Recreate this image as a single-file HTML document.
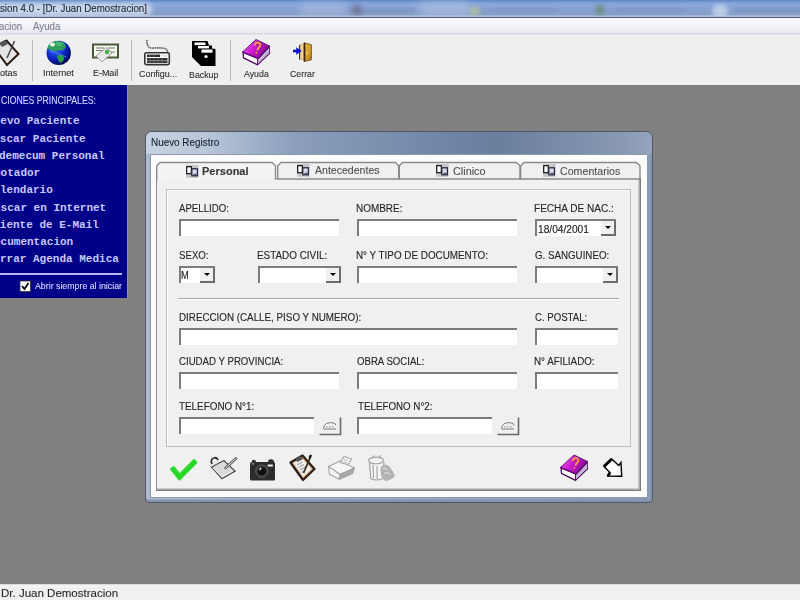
<!DOCTYPE html>
<html><head><meta charset="utf-8">
<style>
*{margin:0;padding:0;box-sizing:border-box}
html,body{width:800px;height:600px;overflow:hidden;background:#808080;font-family:"Liberation Sans",sans-serif}
.a{position:absolute}
.tx{position:absolute;white-space:nowrap;transform-origin:0 0;-webkit-text-stroke:0.12px currentColor}
#title{left:0;top:0;width:800px;height:17px;background:linear-gradient(#5c86c6 0,#7a9ad2 2px,#8aa8da 5px,#88a4d6 7px,#849ecc 10px,#879ec8 14.5px,#b0c0de 16px,#a8bce0 17px);}
#tline{left:0;top:16.5px;width:800px;height:1.3px;background:#545e74}
#menu{left:0;top:17.5px;width:800px;height:16px;background:linear-gradient(#fafafd,#e8e9f1);}
#menuline{left:0;top:33px;width:800px;height:2px;background:linear-gradient(#d4d6de,#e6e7ec)}
#toolbar{left:0;top:35px;width:800px;height:50px;background:#efefef;}
.sep{position:absolute;top:40px;width:1px;height:41px;background:#b8b8b8}
#status{left:0;top:584px;width:800px;height:16px;background:#f0f0f0;}
#statusline{left:0;top:584px;width:800px;height:3px;background:linear-gradient(#d2d2d2 0,#e6e6e6 1px,#fafafa 2px,#f2f2f2 3px)}
#panel{left:0;top:85px;width:128px;height:213px;background:#000088;border-right:1px solid #8c8cd8}
.tb{position:absolute;height:17px;background:#fff;border-top:2px solid #7c7c7c;border-left:2px solid #7c7c7c}
.cb{position:absolute;height:17px;background:#fff;border-top:2px solid #7c7c7c;border-left:2px solid #7c7c7c}
.cb i{position:absolute;right:0;top:0;width:15px;height:15px;background:#f0f0f0;border-right:2px solid #6c6c6c;border-bottom:2px solid #6c6c6c}
.cb i:after{content:"";position:absolute;left:3.5px;top:5px;border-left:3px solid transparent;border-right:3px solid transparent;border-top:3.5px solid #000}
.tab{position:absolute;top:162px;height:17px;background:#f0f0f0;border:1.5px solid #8c8c8c;border-radius:3px 3px 0 0}
</style></head><body>
<div id="title" class="a"></div>
<div class="a" style="left:0;top:0;width:800px;height:16px;overflow:hidden">
 <div class="a" style="left:-10px;top:3px;width:162px;height:13px;border-radius:6px;background:#d2dcee;filter:blur(2.5px);opacity:.9"></div>
 <div class="a" style="left:420px;top:2px;width:50px;height:14px;background:#b4c6e6;filter:blur(4px);opacity:.6"></div>
 <div class="a" style="left:300px;top:2px;width:45px;height:14px;background:#b0c4e6;filter:blur(4px);opacity:.5"></div>
 <div class="a" style="left:352px;top:5px;width:10px;height:10px;background:#6a6a8a;filter:blur(2.5px);opacity:.7"></div>
 <div class="a" style="left:365px;top:8px;width:50px;height:4px;background:#7a8ab8;filter:blur(1.5px);opacity:.35"></div>
 <div class="a" style="left:470px;top:7px;width:10px;height:8px;background:#b8c890;filter:blur(2px);opacity:.7"></div>
 <div class="a" style="left:490px;top:8px;width:65px;height:4px;background:#7a8ab8;filter:blur(1.5px);opacity:.3"></div>
 <div class="a" style="left:596px;top:5px;width:8px;height:10px;background:#6a8a70;filter:blur(2px);opacity:.7"></div>
 <div class="a" style="left:615px;top:8px;width:70px;height:4px;background:#7a8ab8;filter:blur(1.5px);opacity:.3"></div>
 <div class="a" style="left:712px;top:4px;width:16px;height:14px;border-radius:8px;background:#d0def4;filter:blur(2px);opacity:.7"></div>
 <div class="a" style="left:736px;top:8px;width:64px;height:4px;background:#6a7aa8;filter:blur(1.5px);opacity:.3"></div>
</div>
<div id="tline" class="a"></div>
<div id="menu" class="a"></div>
<div id="menuline" class="a"></div>
<div id="toolbar" class="a"></div>
<div class="sep" style="left:32px"></div>
<div class="sep" style="left:131px"></div>
<div class="sep" style="left:230px"></div>
<div id="panel" class="a"></div>
<div class="a" style="left:0;top:273px;width:122px;height:2px;background:#b4b4f0"></div>
<!-- dialog frame -->
<div class="a" style="left:145px;top:131px;width:508px;height:372px;border-radius:7px 7px 4px 4px;background:linear-gradient(90deg,#aebbce,#9cabc2 50%,#8c9cb6);border:1px solid #505868;box-shadow:inset 0 -2.5px 0 #8494b0,inset -2px 0 0 #8494b0"></div>
<div class="a" style="left:146px;top:132px;width:506px;height:22px;border-radius:6px 6px 0 0;background:linear-gradient(90deg,#c6d2e0 0px,#b8c6d8 60px,#8a9ebc 150px,#7086a6 300px,#6a7e9e 350px,#7a8ca8 420px,#8a9ab4 480px,#96a5bc 506px)"></div>
<div class="a" style="left:150px;top:154px;width:498px;height:344px;background:#fcfcfd;border:1px solid #9098a8"></div>
<!-- tab control page -->
<div class="a" style="left:156px;top:178px;width:485px;height:313px;background:#f0f0f0;border-left:1.5px solid #8c8c8c;border-top:1.5px solid #8c8c8c;border-right:1.5px solid #7a7a7a;border-bottom:1.5px solid #7a7a7a;box-shadow:inset -1.5px -1.5px 0 #a8a8a8"></div>
<svg class="a" style="left:0;top:0" width="800" height="600" viewBox="0 0 800 600">
<g stroke="#8a8a8a" stroke-width="1.4" fill="#f0f0f0">
<path d="M277.7,179 L277.7,165.8 L281,162.5 L395.5,162.5 L398.7,165.8 L398.7,179 Z"/>
<path d="M399.3,179 L399.3,165.8 L402.6,162.5 L516.5,162.5 L520,165.8 L520,179 Z"/>
<path d="M520.6,179 L520.6,165.8 L524,162.5 L636.5,162.5 L640,165.8 L640,179 Z"/>
</g>
<path d="M156.7,181 L156.7,165.8 L160,162.5 L272,162.5 L275.5,165.8 L275.5,179.8" stroke="#8a8a8a" stroke-width="1.4" fill="#f3f3f3"/>
</svg>
<!-- groupbox -->
<div class="a" style="left:166px;top:189px;width:465px;height:258px;border:1px solid #bdbdbd;box-shadow:inset 1px 1px 0 #fff"></div>
<!-- fields -->
<div class="tb" style="left:179px;top:219px;width:160px"></div>
<div class="tb" style="left:357px;top:219px;width:160px"></div>
<div class="cb" style="left:535px;top:219px;width:81px"><i></i></div>
<div class="cb" style="left:179px;top:266px;width:36px"><i></i></div>
<div class="cb" style="left:258px;top:266px;width:83px"><i></i></div>
<div class="tb" style="left:357px;top:266px;width:160px"></div>
<div class="cb" style="left:535px;top:266px;width:83px"><i></i></div>
<div class="a" style="left:178px;top:298px;width:441px;height:2px;border-top:1px solid #a8a8a8;border-bottom:1px solid #fff"></div>
<div class="tb" style="left:179px;top:328px;width:338px"></div>
<div class="tb" style="left:535px;top:328px;width:83px"></div>
<div class="tb" style="left:179px;top:372px;width:160px"></div>
<div class="tb" style="left:357px;top:372px;width:160px"></div>
<div class="tb" style="left:535px;top:372px;width:83px"></div>
<div class="tb" style="left:179px;top:417px;width:135px"></div>
<div class="tb" style="left:357px;top:417px;width:135px"></div>
<div id="status" class="a"></div>
<div id="statusline" class="a"></div>
<div class="tx" style="left:-0.30px;top:3.30px;font-family:'Liberation Sans';font-size:10.5px;line-height:10.5px;color:#1c2636;transform:scaleX(0.9259);">sion 4.0 - [Dr. Juan Demostracion]</div>
<div class="tx" style="left:33.20px;top:21.80px;font-family:'Liberation Sans';font-size:10px;line-height:10px;color:#7e808e;transform:scaleX(0.9714);-webkit-text-stroke:0.1px">Ayuda</div>
<div class="tx" style="left:-1.34px;top:21.80px;font-family:'Liberation Sans';font-size:10px;line-height:10px;color:#7e808e;transform:scaleX(0.9714);-webkit-text-stroke:0.1px">acion</div>
<div class="tx" style="left:42.54px;top:68.35px;font-family:'Liberation Sans';font-size:9.5px;line-height:9.5px;color:#303030;transform:scaleX(0.9581);">Internet</div>
<div class="tx" style="left:92.76px;top:68.35px;font-family:'Liberation Sans';font-size:9.5px;line-height:9.5px;color:#303030;transform:scaleX(0.9400);">E-Mail</div>
<div class="tx" style="left:0.45px;top:68.35px;font-family:'Liberation Sans';font-size:9.5px;line-height:9.5px;color:#303030;transform:scaleX(0.9581);">otas</div>
<div class="tx" style="left:138.75px;top:68.62px;font-family:'Liberation Sans';font-size:9.5px;line-height:9.5px;color:#303030;transform:scaleX(0.9375);">Configu...</div>
<div class="tx" style="left:189.07px;top:70.25px;font-family:'Liberation Sans';font-size:9.5px;line-height:9.5px;color:#303030;transform:scaleX(0.9274);">Backup</div>
<div class="tx" style="left:243.75px;top:68.62px;font-family:'Liberation Sans';font-size:9.5px;line-height:9.5px;color:#303030;transform:scaleX(0.9259);">Ayuda</div>
<div class="tx" style="left:290.00px;top:68.62px;font-family:'Liberation Sans';font-size:9.5px;line-height:9.5px;color:#303030;transform:scaleX(0.9259);">Cerrar</div>
<div class="tx" style="left:1.21px;top:95.05px;font-family:'Liberation Sans';font-size:11px;line-height:11px;color:#d4d4ff;transform:scaleX(0.7899);">CIONES PRINCIPALES:</div>
<div class="tx" style="left:-12.90px;top:116.30px;font-family:'Liberation Mono';font-weight:bold;font-size:11px;line-height:11px;color:#c8c8f8;transform:scaleX(1.0000);-webkit-text-stroke:0">Nuevo Paciente</div>
<div class="tx" style="left:-13.40px;top:133.57px;font-family:'Liberation Mono';font-weight:bold;font-size:11px;line-height:11px;color:#c8c8f8;transform:scaleX(1.0000);-webkit-text-stroke:0">Buscar Paciente</div>
<div class="tx" style="left:-14.20px;top:150.84px;font-family:'Liberation Mono';font-weight:bold;font-size:11px;line-height:11px;color:#c8c8f8;transform:scaleX(1.0000);-webkit-text-stroke:0">Vademecum Personal</div>
<div class="tx" style="left:-12.60px;top:168.11px;font-family:'Liberation Mono';font-weight:bold;font-size:11px;line-height:11px;color:#c8c8f8;transform:scaleX(1.0000);-webkit-text-stroke:0">Anotador</div>
<div class="tx" style="left:-13.20px;top:185.38px;font-family:'Liberation Mono';font-weight:bold;font-size:11px;line-height:11px;color:#c8c8f8;transform:scaleX(1.0000);-webkit-text-stroke:0">Calendario</div>
<div class="tx" style="left:-12.60px;top:202.65px;font-family:'Liberation Mono';font-weight:bold;font-size:11px;line-height:11px;color:#c8c8f8;transform:scaleX(1.0000);-webkit-text-stroke:0">Buscar en Internet</div>
<div class="tx" style="left:-13.40px;top:219.92px;font-family:'Liberation Mono';font-weight:bold;font-size:11px;line-height:11px;color:#c8c8f8;transform:scaleX(1.0000);-webkit-text-stroke:0">Cliente de E-Mail</div>
<div class="tx" style="left:-12.60px;top:237.19px;font-family:'Liberation Mono';font-weight:bold;font-size:11px;line-height:11px;color:#c8c8f8;transform:scaleX(1.0000);-webkit-text-stroke:0">Documentacion</div>
<div class="tx" style="left:-13.20px;top:254.46px;font-family:'Liberation Mono';font-weight:bold;font-size:11px;line-height:11px;color:#c8c8f8;transform:scaleX(1.0000);-webkit-text-stroke:0">Cerrar Agenda Medica</div>
<div class="tx" style="left:35.10px;top:281.20px;font-family:'Liberation Sans';font-size:9.5px;line-height:9.5px;color:#d8d8ff;transform:scaleX(0.9255);">Abrir siempre al iniciar</div>
<div class="tx" style="left:151.10px;top:137.00px;font-family:'Liberation Sans';font-size:11px;line-height:11px;color:#1a2230;transform:scaleX(0.9000);">Nuevo Registro</div>
<div class="tx" style="left:201.90px;top:166.45px;font-family:'Liberation Sans';font-weight:bold;font-size:11px;line-height:11px;color:#383838;transform:scaleX(1.0022);">Personal</div>
<div class="tx" style="left:314.60px;top:165.35px;font-family:'Liberation Sans';font-size:11px;line-height:11px;color:#505050;transform:scaleX(0.9597);">Antecedentes</div>
<div class="tx" style="left:452.52px;top:165.50px;font-family:'Liberation Sans';font-size:11px;line-height:11px;color:#505050;transform:scaleX(0.9844);">Clinico</div>
<div class="tx" style="left:560.03px;top:166.00px;font-family:'Liberation Sans';font-size:11px;line-height:11px;color:#505050;transform:scaleX(0.9672);">Comentarios</div>
<div class="tx" style="left:178.80px;top:204.00px;font-family:'Liberation Sans';font-size:10px;line-height:10px;color:#262626;transform:scaleX(0.9647);">APELLIDO:</div>
<div class="tx" style="left:356.00px;top:204.00px;font-family:'Liberation Sans';font-size:10px;line-height:10px;color:#262626;transform:scaleX(0.9956);">NOMBRE:</div>
<div class="tx" style="left:533.79px;top:204.00px;font-family:'Liberation Sans';font-size:10px;line-height:10px;color:#262626;transform:scaleX(1.0051);">FECHA DE NAC.:</div>
<div class="tx" style="left:178.53px;top:251.25px;font-family:'Liberation Sans';font-size:10px;line-height:10px;color:#262626;transform:scaleX(0.9655);">SEXO:</div>
<div class="tx" style="left:257.01px;top:251.25px;font-family:'Liberation Sans';font-size:10px;line-height:10px;color:#262626;transform:scaleX(0.9891);">ESTADO CIVIL:</div>
<div class="tx" style="left:355.76px;top:251.25px;font-family:'Liberation Sans';font-size:10px;line-height:10px;color:#262626;transform:scaleX(0.9860);">N&deg; Y TIPO DE DOCUMENTO:</div>
<div class="tx" style="left:534.90px;top:251.25px;font-family:'Liberation Sans';font-size:10px;line-height:10px;color:#262626;transform:scaleX(0.9747);">G. SANGUINEO:</div>
<div class="tx" style="left:178.52px;top:313.25px;font-family:'Liberation Sans';font-size:10px;line-height:10px;color:#262626;transform:scaleX(0.9810);">DIRECCION (CALLE, PISO Y NUMERO):</div>
<div class="tx" style="left:535.10px;top:313.25px;font-family:'Liberation Sans';font-size:10px;line-height:10px;color:#262626;transform:scaleX(0.9611);">C. POSTAL:</div>
<div class="tx" style="left:178.75px;top:357.25px;font-family:'Liberation Sans';font-size:10px;line-height:10px;color:#262626;transform:scaleX(0.9650);">CIUDAD Y PROVINCIA:</div>
<div class="tx" style="left:356.75px;top:357.25px;font-family:'Liberation Sans';font-size:10px;line-height:10px;color:#262626;transform:scaleX(0.9616);">OBRA SOCIAL:</div>
<div class="tx" style="left:533.92px;top:357.25px;font-family:'Liberation Sans';font-size:10px;line-height:10px;color:#262626;transform:scaleX(0.9800);">N&deg; AFILIADO:</div>
<div class="tx" style="left:179.40px;top:402.00px;font-family:'Liberation Sans';font-size:10px;line-height:10px;color:#262626;transform:scaleX(0.9868);">TELEFONO N&deg;1:</div>
<div class="tx" style="left:357.50px;top:402.00px;font-family:'Liberation Sans';font-size:10px;line-height:10px;color:#262626;transform:scaleX(0.9763);">TELEFONO N&deg;2:</div>
<div class="tx" style="left:538.03px;top:223.70px;font-family:'Liberation Sans';font-size:10.5px;line-height:10.5px;color:#1a1a1a;transform:scaleX(0.9686);">18/04/2001</div>
<div class="tx" style="left:181.37px;top:271.40px;font-family:'Liberation Sans';font-size:10px;line-height:10px;color:#1a1a1a;transform:scaleX(0.9286);">M</div>
<div class="tx" style="left:0.85px;top:587.85px;font-family:'Liberation Sans';font-size:11px;line-height:11px;color:#2a2a2a;transform:scaleX(1.0464);">Dr. Juan Demostracion</div>
<svg class="a" style="left:0;top:0" width="800" height="600" viewBox="0 0 800 600">
<defs>
<radialGradient id="gl" cx="0.35" cy="0.3" r="0.75"><stop offset="0" stop-color="#3a70ff"/><stop offset="0.6" stop-color="#0a22c0"/><stop offset="1" stop-color="#000848"/></radialGradient>
<linearGradient id="bk" x1="0" y1="0.3" x2="1" y2="0.7"><stop offset="0" stop-color="#f050f0"/><stop offset="0.45" stop-color="#c818c8"/><stop offset="1" stop-color="#7a0a8a"/></linearGradient>
<linearGradient id="dr" x1="0" y1="0" x2="1" y2="1"><stop offset="0" stop-color="#f4c444"/><stop offset="0.6" stop-color="#d49a28"/><stop offset="1" stop-color="#a86c10"/></linearGradient>
</defs>
<!-- Notas clipboard (toolbar, clipped at left) -->
<g transform="translate(-16,-415)">
 <path d="M10,462.5 L22.5,455.5 L34.5,469 L23,480 Z" fill="#e4e4e4" stroke="#2a1a14" stroke-width="2"/>
 <path d="M15,458 L21,455 L24,459 L18,462 Z" fill="#555"/>
 <path d="M23,473 L30.5,456" stroke="#444" stroke-width="1.5"/>
</g>
<!-- globe -->
<circle cx="58.7" cy="52.9" r="12.2" fill="url(#gl)"/>
<path d="M47.5,47.5 Q49,42.5 54,41.2 Q59,40.6 63,42.3 Q66.5,44.5 65.5,48 Q63,51.5 59.5,50 Q56,51.5 52.5,50.5 Q49,50.5 47.5,47.5 Z" fill="#2e9c5c"/>
<path d="M56,42 Q60,41.5 63,43 Q62,46 58.5,46.5 Q56,45.5 56,42 Z" fill="#50c080" opacity="0.8"/>
<ellipse cx="52.5" cy="44.6" rx="2.6" ry="2.1" fill="#e8f4ec"/>
<path d="M49.5,50.5 Q57,53 66.5,57" fill="none" stroke="#5a9ae8" stroke-width="1.3" opacity="0.7"/>
<path d="M57,55.5 Q61.5,54 64.2,57.5 Q63.8,61.5 60.5,63 Q57.5,60.5 57,55.5 Z" fill="#28a040"/>
<!-- email -->
<rect x="93" y="44.5" width="25" height="13" fill="#f4f8ec" stroke="#4a5a3a" stroke-width="2"/>
<path d="M96,48 h8 M96,50.5 h6 M108,48 h7 M108,52 h7" stroke="#777" stroke-width="1"/>
<path d="M96,56 L106,47.5 L112,53 L102,62 Z" fill="#e8e8e8" stroke="#888" stroke-width="0.8"/>
<circle cx="107" cy="52" r="2.2" fill="#40b050"/>
<!-- keyboard -->
<path d="M147,40 Q146.5,43 148,46 Q149.5,48.5 154,48 Q160,47.5 165,48.5 Q167.5,49.5 167.5,52.5" fill="none" stroke="#666" stroke-width="1.7" stroke-dasharray="1.6 0.6"/>
<rect x="144.8" y="52.8" width="24.5" height="11.8" rx="1.5" fill="#fff" stroke="#333" stroke-width="1.6"/>
<rect x="147" y="54.6" width="13" height="2.4" fill="#2a2a2a"/>
<rect x="160.5" y="55" width="7" height="1.6" fill="#ddd"/>
<rect x="147" y="58" width="20.5" height="2.6" fill="#2a2a2a"/>
<rect x="147" y="61" width="20.5" height="2" fill="#3a3a3a"/>
<path d="M150,58 v5 M154,58 v5 M158,58 v5 M162,58 v5 M150,54.6 v2.4 M154,54.6 v2.4" stroke="#888" stroke-width="0.6"/>
<!-- backup floppies -->
<path d="M192,41 L207.5,41 L209,45.5 L212,45.5 L212,48.5 L215.5,49 L215.5,66 L201,66 L192,57 Z" fill="#000"/>
<rect x="194.5" y="42.5" width="11" height="2.6" fill="#fff"/>
<rect x="198" y="46" width="11" height="2.4" fill="#fff"/>
<rect x="201.5" y="49.5" width="11" height="3.2" fill="#fff"/>
<circle cx="206" cy="56.5" r="1.6" fill="#fff"/>
<!-- ayuda book toolbar -->
<g id="book">
 <path d="M243,52 L243.5,57.8 L257.5,64.8 L269.5,53.2 L269,46 Z" fill="#fff" stroke="#4a0a5a" stroke-width="1.3" stroke-linejoin="round"/>
 <path d="M257.5,58.5 L269,47.5 L269.3,52.8 L257.5,64.2 Z" fill="#c4b4d8"/>
 <path d="M256,39.5 L269.5,46 L258,58.2 L242.5,52 Z" fill="url(#bk)" stroke="#5a0a70" stroke-width="0.9" stroke-linejoin="round"/>
 <path d="M243,52.3 L258,58.6 L269.5,46.5" fill="none" stroke="#5a0a70" stroke-width="1.4"/>
 <path d="M257.5,58.5 L257.5,64.6" stroke="#5a0a70" stroke-width="1"/>
 <path d="M254.5,45.5 Q255.5,42.2 258.8,42.8 Q261.5,44 259.5,47 Q257.8,48.3 257.3,50.3" fill="none" stroke="#f8a040" stroke-width="1.8"/>
 <path d="M256.2,45.2 Q257.5,43.8 258.6,44.8" fill="none" stroke="#8a3a20" stroke-width="0.9"/>
 <circle cx="256.4" cy="52.6" r="0.9" fill="#f8a040"/>
</g>
<!-- cerrar door -->
<rect x="299.5" y="44.2" width="5" height="15.3" fill="#f8d48c"/>
<path d="M299.5,44.2 h5 M299.5,59.5 h5" stroke="#c8c0a0" stroke-width="0.9"/>
<path d="M299.6,45 v14.5" stroke="#3a3a30" stroke-width="1.2"/>
<path d="M304,42.7 L311.4,44.8 L311.4,59.8 L304,61.6 Z" fill="url(#dr)" stroke="#6a4a10" stroke-width="0.8"/>
<path d="M304.6,43 L304.6,61.3" stroke="#3a2808" stroke-width="1.6"/>
<circle cx="306.8" cy="53" r="0.7" fill="#fff0c0"/>
<path d="M293,51 L297.5,51" stroke="#1010c8" stroke-width="2.6"/>
<path d="M296.2,47.2 L301.8,51 L296.2,54.8 Z" fill="#1414d0"/>
<!-- dialog bottom: check -->
<path d="M173.5,469.5 L179.5,477 L194,462.5" fill="none" stroke="#a8f0a8" stroke-width="6.5" stroke-linecap="round" stroke-linejoin="round"/>
<path d="M173.5,469.5 L179.5,477 L194,462.5" fill="none" stroke="#28d828" stroke-width="5" stroke-linecap="square" stroke-linejoin="miter"/>
<!-- tablet -->
<path d="M211.5,467 L224,460.5 L235,471 L222,478.5 Z" fill="#dadada" stroke="#555" stroke-width="1.4"/>
<path d="M213,468 L222,477 L233,471" fill="none" stroke="#fff" stroke-width="0.8"/>
<path d="M212,464 Q210,459 214,458 Q217,457 218,460" fill="none" stroke="#333" stroke-width="1.8"/>
<path d="M225.5,468 L236,458.5" stroke="#555" stroke-width="2.6" stroke-linecap="round"/>
<path d="M225.5,468 L236,458.5" stroke="#f0f0f0" stroke-width="1" stroke-linecap="round"/>
<!-- camera -->
<path d="M250,464 Q250,462 252,462 L252,460.5 Q253.5,459 255.5,460.5 L256,462 L268,462 L268.5,460 Q271,458.5 273.5,460 L274,462 Q275,462 275,464 L275,479 Q275,480.6 273.5,480.6 L251.5,480.6 Q250,480.6 250,479 Z" fill="#2c2c2c"/>
<circle cx="261.8" cy="471.2" r="6.2" fill="#3a3a3a" stroke="#5a5a5a" stroke-width="1"/>
<circle cx="261.8" cy="471.2" r="4" fill="#0e0e0e"/>
<path d="M259.6,470.2 L261,467.8" stroke="#e8e8e8" stroke-width="1.5"/>
<rect x="267.5" y="464.6" width="5.5" height="2" rx="0.8" fill="#f0f0f0"/>
<circle cx="253" cy="463.8" r="1.2" fill="#777"/>
<!-- clipboard -->
<path d="M290.5,462.5 L302.5,455.5 L314.5,469 L303,480 Z" fill="#d8a878" stroke="#2e2018" stroke-width="2.2" stroke-linejoin="round"/>
<path d="M293.5,463 L302,458 L311.5,469 L303,477 Z" fill="#eeeeee"/>
<path d="M295,458.5 L300.5,455.5 L303,459 L297.5,462 Z" fill="#505050"/>
<path d="M297,465 L302.5,462 M298.5,467.5 L304,464.5 M300,470 L305.5,467 M301.5,472.5 L305,470.5" stroke="#8a8a8a" stroke-width="0.9"/>
<path d="M303.5,473 L310.5,456.8" stroke="#3a3020" stroke-width="1.8"/>
<path d="M309.5,458 L311,455" stroke="#111" stroke-width="2.4"/>
<!-- printer disabled -->
<g stroke="#a4a4a4" stroke-width="1.1" stroke-linejoin="round">
 <path d="M328.5,466.4 L340,461 L354.5,468 L340,474.5 Z" fill="#f6f6f6"/>
 <path d="M328.5,466.4 L329.5,474.2 L339.5,479.3 L340,474.5 Z" fill="#f4f4f4"/>
 <path d="M340,474.5 L354.5,468 L352.5,473.5 L339.5,479.3 Z" fill="#a8a8a8"/>
 <path d="M340.5,462.7 L344,456.5 L351.7,459 L347.9,464.5 Z" fill="#f8f8f8"/>
</g>
<path d="M344,459.5 l4,1.2 M343,461.5 l4,1.2" stroke="#b0b0b0" stroke-width="0.8"/>
<!-- trash disabled -->
<g stroke="#a4a4a4" stroke-width="1.2">
 <path d="M369.5,462 L370.8,478.5 Q376,481.5 383,478.5 L384,462" fill="#f6f6f6"/>
 <ellipse cx="376" cy="460.5" rx="7.5" ry="3.3" fill="#f2f2f2"/>
 <path d="M373,465 L373.6,478 M377,466 L377.2,479.5" fill="none"/>
 <path d="M372,458.5 L374,455.5 M379,458 L381,455" fill="none"/>
</g>
<path d="M380.5,467 Q384,462.5 389,466 Q393.5,471 395,476 Q391,480.5 385.5,481 Q381,479 380.5,472 Z" fill="#b4b4b4"/>
<path d="M382.5,469 Q385,466.5 387.5,470 M384,474 Q387,471 390.5,474.5" fill="none" stroke="#e4e4e4" stroke-width="1"/>
<!-- book bottom -->
<use href="#book" x="318" y="415.5"/>
<!-- exit arrow -->
<path d="M604,466.5 L611.7,459 L618.7,465.5 L621,462.5 L621.7,476.2 L607.8,476 L610,472.5 Z" fill="#fff" stroke="#000" stroke-width="1.4" stroke-linejoin="miter"/>
<path d="M604,466.5 L611.7,459" stroke="#000" stroke-width="3"/>
<path d="M607.8,476 L610,472.5" stroke="#000" stroke-width="2.6"/>
<!-- phone buttons -->
<g id="ph1">
 <path d="M319.5,434.5 L340.5,434.5 L340.5,417.5" fill="none" stroke="#6a6a6a" stroke-width="1.6"/>
 <path d="M323.5,428.5 Q323.5,425 326.5,423.5 Q331,421.5 335,423.5 L336,425.5" fill="none" stroke="#7a7a7a" stroke-width="1"/>
 <path d="M323.5,429 L336,429" stroke="#7a7a7a" stroke-width="1"/>
 <path d="M326,426.8 h1.5 M329,426.8 h1.5 M332,426.8 h1.5" stroke="#8a8a8a" stroke-width="1"/>
</g>
<use href="#ph1" x="178" y="0"/>
<!-- sanguineo checkbox -->
<rect x="20" y="281" width="10.5" height="10.5" fill="#fff" stroke="#333" stroke-width="0.8"/>
<path d="M22,286 L24.5,289 L28.5,283" fill="none" stroke="#000" stroke-width="1.8"/>
<!-- tab icons -->
<g id="tic">
 <rect x="436" y="164" width="12.5" height="12.8" fill="#c6c6cc"/>
 <rect x="436.7" y="165.7" width="4.6" height="7" fill="#fff" stroke="#111" stroke-width="1.2"/>
 <rect x="441.8" y="167.8" width="5.6" height="7" fill="#dcdcf2" stroke="#2a2a40" stroke-width="1.3"/>
 <path d="M443.5,173.3 h3" stroke="#2a2a40" stroke-width="1"/>
</g>
<use href="#tic" x="-250" y="1"/>
<use href="#tic" x="-139" y="0"/>
<use href="#tic" x="107" y="0"/>
</svg>
</body></html>
